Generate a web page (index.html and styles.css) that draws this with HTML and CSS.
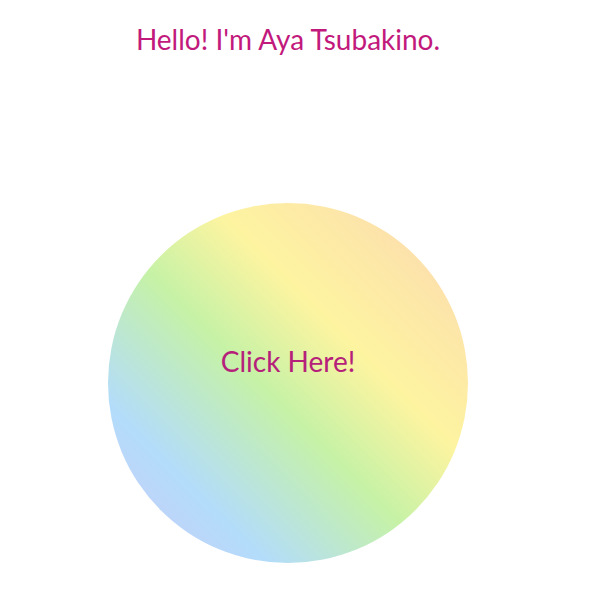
FILE: index.html
```html
<!DOCTYPE html>
<html>
<head>
<meta charset="utf-8">
<link rel="stylesheet" href="styles.css">
</head>
<body>
<main class="page">
  <h1 class="title">Hello! I'm Aya Tsubakino.</h1>
  <button class="orb" type="button"><span class="orb-label">Click Here!</span></button>
</main>
</body>
</html>
```
FILE: styles.css
```css
html, body {
  margin: 0;
  padding: 0;
  background: #ffffff;
}
.page {
  width: 576px;
  display: flex;
  flex-direction: column;
  align-items: center;
  font-family: Lato, "Noto Sans", sans-serif;
  color: #c2197c;
}
.title {
  margin: 18px 0 0;
  font-size: 28px;
  font-weight: 400;
  line-height: 42px;
}
.orb {
  margin-top: 143px;
  width: 360px;
  height: 360px;
  border: none;
  border-radius: 50%;
  padding: 0 0 44px;
  display: flex;
  align-items: center;
  justify-content: center;
  font-family: inherit;
  color: #b5217a;
  font-size: 28px;
  background: linear-gradient(45deg, #cfc8f6 0%, #b3dcfb 22%, #c6f2a6 46%, #fdf4a0 64%, #fde7a8 80%, #fad4b3 100%);
}
.orb-label {
  line-height: 1;
}
```
